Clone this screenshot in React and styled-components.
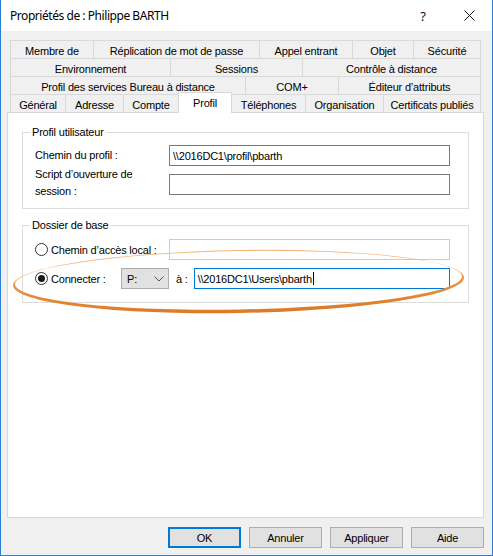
import React from "react";
import styled, { createGlobalStyle } from "styled-components";

const GlobalStyle = createGlobalStyle`
  html, body { margin: 0; padding: 0; background: #ffffff; }
  body {
    font-family: "Liberation Sans", Arial, sans-serif;
    font-size: 11px;
    letter-spacing: -0.2px;
    color: #000;
  }
  * { box-sizing: border-box; }
`;

const Window = styled.div`
  position: relative;
  width: 493px;
  height: 556px;
  background: #f0f0f0;
  border: 1px solid #2b7ed6;
  border-top: none;
  display: flex;
  flex-direction: column;
  overflow: hidden;
`;

const TitleBar = styled.div`
  height: 31px;
  flex: none;
  background: #fff;
  display: flex;
  align-items: center;
  padding-left: 9px;
  font-family: "Noto Sans", "Liberation Sans", sans-serif;
  font-size: 12px;
  letter-spacing: -0.45px;
`;

const Title = styled.div`
  flex: 1;
`;

const CaptionButton = styled.div`
  width: 46px;
  height: 30px;
  display: flex;
  align-items: center;
  justify-content: center;
  font-size: 13px;
  letter-spacing: 0;
  color: #111;
`;

const Body = styled.div`
  flex: 1;
  display: flex;
  flex-direction: column;
  padding: 9px 8px 0 6px;
`;

const TabStrip = styled.div`
  margin: 0 3px;
  display: flex;
  flex-direction: column;
`;

const TabRow = styled.div`
  display: flex;
  height: 18px;
`;

const Tab = styled.div`
  flex: none;
  width: ${(p) => p.$w}px;
  height: ${(p) => (p.$active ? 21 : 18)}px;
  margin-top: ${(p) => (p.$active ? -2 : 0)}px;
  margin-right: ${(p) => (p.$active ? -1 : 0)}px;
  border: 1px solid #d9d9d9;
  border-bottom: none;
  border-right: ${(p) => (p.$active ? "1px solid #d9d9d9" : "none")};
  background: ${(p) => (p.$active ? "#ffffff" : "#f0f0f0")};
  position: relative;
  z-index: ${(p) => (p.$active ? 2 : 0)};
  display: flex;
  align-items: center;
  justify-content: center;
  padding-top: ${(p) => (p.$active ? 0 : 2)}px;
  white-space: nowrap;
  &:last-child {
    border-right: 1px solid #d9d9d9;
  }
`;

const Panel = styled.div`
  height: 406px;
  flex: none;
  background: #fff;
  border: 1px solid #d9d9d9;
  padding: 13px 14px 0;
  display: flex;
  flex-direction: column;
  gap: 10px;
`;

const Group = styled.fieldset`
  margin: 0;
  min-width: 0;
  border: 1px solid #dcdcdc;
  padding: ${(p) => p.$pt}px 18px 13px 12px;
  display: flex;
  flex-direction: column;
  gap: 8px;
`;

const Legend = styled.legend`
  padding: 0 2px;
  margin-left: -5px;
  line-height: 13px;
  font-size: 11px;
`;

const Row = styled.div`
  display: flex;
  align-items: center;
  height: 21px;
`;

const Label = styled.div`
  flex: none;
  width: ${(p) => p.$w}px;
  line-height: 13px;
  white-space: nowrap;
`;

/* two-line caption spread over the height of the field beside it */
const TallLabel = styled(Label)`
  line-height: 17px;
  margin-top: -4px;
`;

const TextBox = styled.div`
  flex: none;
  width: ${(p) => p.$w}px;
  height: 21px;
  background: #fff;
  border: 1px solid
    ${(p) => (p.$state === "disabled" ? "#cccccc" : p.$state === "focus" ? "#0078d7" : "#7a7a7a")};
  padding-left: 3px;
  display: flex;
  align-items: center;
  white-space: nowrap;
`;

const Caret = styled.span`
  display: inline-block;
  width: 1px;
  height: 13px;
  background: #000;
  margin-left: 1px;
`;

const RadioLabel = styled.label`
  flex: none;
  width: ${(p) => p.$w}px;
  display: flex;
  align-items: center;
  gap: 3px;
  white-space: nowrap;
`;

const RadioCircle = styled.span`
  flex: none;
  width: 13px;
  height: 13px;
  border: 1px solid #333;
  border-radius: 50%;
  background: #fff;
  display: flex;
  align-items: center;
  justify-content: center;
  &::after {
    content: "";
    width: 7px;
    height: 7px;
    border-radius: 50%;
    background: ${(p) => (p.$checked ? "#1a1a1a" : "transparent")};
  }
`;

const Combo = styled.div`
  flex: none;
  width: 48px;
  height: 21px;
  background: #e1e1e1;
  border: 1px solid #adadad;
  display: flex;
  align-items: center;
  justify-content: space-between;
  padding: 0 4px 0 5px;
`;

const Small = styled.span`
  flex: none;
  margin: 0 6px 0 7px;
`;

const ButtonRow = styled.div`
  display: flex;
  justify-content: flex-end;
  gap: 8px;
  margin-top: 9px;
`;

const Button = styled.div`
  width: 73px;
  height: 21px;
  background: #e1e1e1;
  border: 1px solid ${(p) => (p.$default ? "#0078d7" : "#adadad")};
  box-shadow: ${(p) => (p.$default ? "inset 0 0 0 1px #0078d7" : "none")};
  display: flex;
  align-items: center;
  justify-content: center;
`;

const Annotation = styled.svg`
  position: absolute;
  left: -1px;
  top: 0;
  pointer-events: none;
  z-index: 5;
`;

const tabRows = [
  [["Membre de", 83], ["Réplication de mot de passe", 166], ["Appel entrant", 93], ["Objet", 61], ["Sécurité", 68]],
  [["Environnement", 160], ["Sessions", 132], ["Contrôle à distance", 179]],
  [["Profil des services Bureau à distance", 235], ["COM+", 93], ["Éditeur d’attributs", 143]],
  [
    ["Général", 55],
    ["Adresse", 58],
    ["Compte", 55],
    ["Profil", 54, true],
    ["Téléphones", 74],
    ["Organisation", 78],
    ["Certificats publiés", 98],
  ],
];

export default function App() {
  return (
    <>
      <GlobalStyle />
      <Window>
        <TitleBar>
          <Title>Propriétés de : Philippe BARTH</Title>
          <CaptionButton>?</CaptionButton>
          <CaptionButton>
            <svg width="11" height="11" viewBox="0 0 11 11">
              <path d="M0.5 0.5 L10.5 10.5 M10.5 0.5 L0.5 10.5" stroke="#111" strokeWidth="1" />
            </svg>
          </CaptionButton>
        </TitleBar>
        <Body>
          <TabStrip>
            {tabRows.map((row, i) => (
              <TabRow key={i}>
                {row.map(([label, w, active]) => (
                  <Tab key={label} $w={w} $active={active}>
                    {label}
                  </Tab>
                ))}
              </TabRow>
            ))}
          </TabStrip>
          <Panel>
            <Group $pt={6}>
              <Legend>Profil utilisateur</Legend>
              <Row>
                <Label $w={134}>Chemin du profil :</Label>
                <TextBox $w={281}>{"\\\\2016DC1\\profil\\pbarth"}</TextBox>
              </Row>
              <Row>
                <TallLabel $w={134}>
                  Script d’ouverture de
                  <br />
                  session :
                </TallLabel>
                <TextBox $w={281} />
              </Row>
            </Group>
            <Group $pt={7}>
              <Legend>Dossier de base</Legend>
              <Row>
                <RadioLabel $w={134}>
                  <RadioCircle />
                  Chemin d’accès local :
                </RadioLabel>
                <TextBox $w={281} $state="disabled" />
              </Row>
              <Row>
                <RadioLabel $w={86}>
                  <RadioCircle $checked />
                  Connecter :
                </RadioLabel>
                <Combo>
                  <span>P:</span>
                  <svg width="10" height="6" viewBox="0 0 10 6">
                    <path d="M0.5 0.5 L5 5 L9.5 0.5" fill="none" stroke="#555" strokeWidth="1" />
                  </svg>
                </Combo>
                <Small>à :</Small>
                <TextBox $w={256} $state="focus">
                  {"\\\\2016DC1\\Users\\pbarth"}
                  <Caret />
                </TextBox>
              </Row>
            </Group>
          </Panel>
          <ButtonRow>
            <Button $default>OK</Button>
            <Button>Annuler</Button>
            <Button>Appliquer</Button>
            <Button>Aide</Button>
          </ButtonRow>
        </Body>
        <Annotation width="493" height="556" viewBox="0 0 493 556">
          <defs>
            <linearGradient id="ring" x1="0" y1="0" x2="0" y2="1">
              <stop offset="0" stopColor="#f3b77a" />
              <stop offset="0.5" stopColor="#ea9445" />
              <stop offset="1" stopColor="#dc7a26" />
            </linearGradient>
          </defs>
          <g transform="rotate(-1 239 281)">
            <path
              fillRule="evenodd"
              fill="url(#ring)"
              d="M13 281.5 A225.5 31.5 0 1 0 464 281.5 A225.5 31.5 0 1 0 13 281.5 Z
                 M15 280.3 A223.5 29.2 0 1 0 462 280.3 A223.5 29.2 0 1 0 15 280.3 Z"
            />
          </g>
        </Annotation>
      </Window>
    </>
  );
}
